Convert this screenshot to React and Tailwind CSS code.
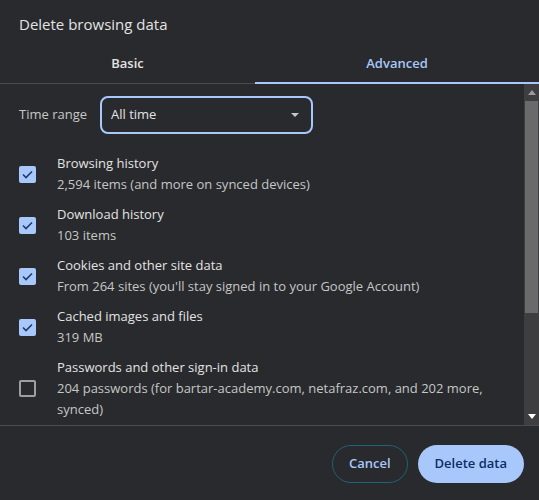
import { useState } from "react";

const items = [
  { title: "Browsing history", sub: "2,594 items (and more on synced devices)", checked: true },
  { title: "Download history", sub: "103 items", checked: true },
  { title: "Cookies and other site data", sub: "From 264 sites (you'll stay signed in to your Google Account)", checked: true },
  { title: "Cached images and files", sub: "319 MB", checked: true },
  {
    title: "Passwords and other sign-in data",
    sub: "204 passwords (for bartar-academy.com, netafraz.com, and 202 more, synced)",
    checked: false,
  },
];

const Check = ({ on }) =>
  on ? (
    <div className="w-[17px] h-[17px] rounded-[2px] bg-[#a8c7fa] flex items-center justify-center shrink-0">
      <svg width="11" height="9" viewBox="0 0 11 9" fill="none">
        <path d="M1 4.5 L4 7.5 L10 1.5" stroke="#1f3a6b" strokeWidth="1.6" />
      </svg>
    </div>
  ) : (
    <div className="w-[17px] h-[17px] rounded-[2px] border-2 border-[#9aa0a6] shrink-0" />
  );

const App = () => {
  const [tab] = useState("advanced");

  return (
    <div
      className="w-[539px] h-[500px] bg-[#292a2d] text-[#e3e3e3] flex flex-col overflow-hidden"
      style={{ fontFamily: "'Open Sans', 'Noto Sans', sans-serif" }}
    >
      {/* Title */}
      <div className="h-[45px] pl-[19px] pt-[13px] text-[15px] leading-[22px]">Delete browsing data</div>

      {/* Tabs */}
      <div className="flex h-[39px] border-b border-[#4a4b4e]">
        <div className="w-[255px] flex items-center justify-center text-[13px] font-semibold text-[#e3e3e3]">
          Basic
        </div>
        <div className="flex-1 relative flex items-center justify-center text-[13px] font-semibold text-[#a8c7fa]">
          Advanced
          {tab === "advanced" && <div className="absolute left-0 right-0 bottom-[-1px] h-[2px] bg-[#a8c7fa]" />}
        </div>
      </div>

      {/* Scroll body */}
      <div className="flex h-[342px] border-b border-[#4a4b4e]">
        <div className="flex-1 flex flex-col">
          <div className="flex items-center pl-[19px] pt-[11px] h-[51px]">
            <span className="text-[13px] text-[#c7c7c7] w-[81px]">Time range</span>
            <div className="w-[213px] h-[38px] rounded-[8px] border-2 border-[#a8c7fa] flex items-center justify-between pl-[9px] pr-[12px]">
              <span className="text-[13px] text-[#e3e3e3]">All time</span>
              <svg width="8" height="4" viewBox="0 0 8 4">
                <path d="M0 0 L8 0 L4 4 Z" fill="#c4c7c5" />
              </svg>
            </div>
          </div>

          <div className="flex flex-col pt-[18px] gap-[9px]">
            {items.map((it) => (
              <div key={it.title} className="flex items-center pl-[19px] pr-[20px]">
                <Check on={it.checked} />
                <div className="pl-[21px] flex flex-col text-[13px] leading-[21px]">
                  <span className="text-[#e3e3e3]">{it.title}</span>
                  <span className="text-[#c4c7c5]">{it.sub}</span>
                </div>
              </div>
            ))}
          </div>
        </div>

        {/* Scrollbar */}
        <div className="w-[15px] bg-[#3e3e40] flex flex-col items-center">
          <div className="h-[17px] flex items-center justify-center">
            <svg width="8" height="5" viewBox="0 0 8 5">
              <path d="M0 5 L8 5 L4 0 Z" fill="#9a9a9a" />
            </svg>
          </div>
          <div className="w-[13px] h-[212px] bg-[#6a6a6a]" />
          <div className="flex-1" />
          <div className="h-[17px] flex items-center justify-center">
            <svg width="8" height="5" viewBox="0 0 8 5">
              <path d="M0 0 L8 0 L4 5 Z" fill="#ffffff" />
            </svg>
          </div>
        </div>
      </div>

      {/* Footer */}
      <div className="flex justify-end items-center gap-[10px] pr-[15px] pt-[19px]">
        <button className="h-[38px] px-[16px] rounded-full border border-[#1c6477] text-[13px] font-semibold text-[#a8c7fa]">
          Cancel
        </button>
        <button className="h-[38px] px-[17px] rounded-full bg-[#a8c7fa] text-[13px] font-semibold text-[#0b2e66]">
          Delete data
        </button>
      </div>
    </div>
  );
};

export default App;
